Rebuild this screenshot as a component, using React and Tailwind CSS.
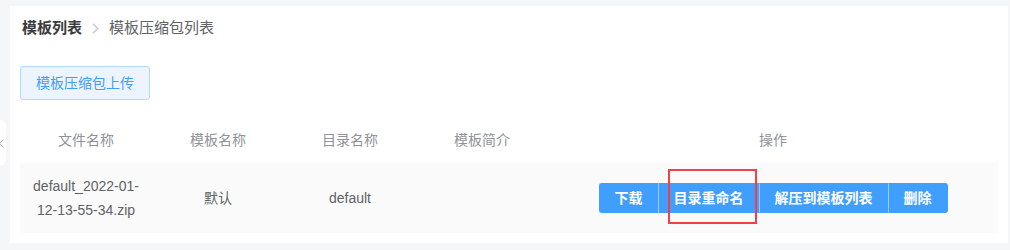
const font = { fontFamily: '"Liberation Sans", "Noto Sans CJK SC", sans-serif' };

const rows = [
  {
    file: ["default_2022-01-", "12-13-55-34.zip"],
    name: "默认",
    dir: "default",
    desc: "",
  },
];

const headers = ["文件名称", "模板名称", "目录名称", "模板简介", "操作"];

const App = () => {
  return (
    <div className="relative min-h-[250px] w-[1010px] bg-[#f5f6f7] pt-[6px] pl-[10px]" style={font}>
      {/* collapsed sidebar toggle */}
      <div className="absolute left-[-14px] top-[120px] flex h-[46px] w-[20px] items-center justify-end rounded-[6px] bg-white pr-[2px]">
        <svg width="5" height="9" viewBox="0 0 5 9" fill="none">
          <path d="M4.5 0.5L0.8 4.5L4.5 8.5" stroke="#a8abb2" strokeWidth="1" />
        </svg>
      </div>

      <div className="w-[998px] bg-white px-[10px] pt-[12px] pb-[10px]">
        {/* Breadcrumb */}
        <div className="flex h-[20px] items-center pl-[2px] text-[15px]">
          <span className="font-bold text-[#3a3c40]">模板列表</span>
          <svg className="mx-[10px]" width="7" height="11" viewBox="0 0 7 11" fill="none">
            <path d="M1 0.8L5.8 5.5L1 10.2" stroke="#c0c4cc" strokeWidth="1.2" />
          </svg>
          <span className="text-[#606266]">模板压缩包列表</span>
        </div>

        {/* Upload button */}
        <div className="mt-[28px]">
          <button className="h-[34px] rounded-[3px] border border-[#b3d8ff] bg-[#ecf5ff] px-[15px] text-[14px] text-[#409eff]">
            模板压缩包上传
          </button>
        </div>

        {/* Table */}
        <div className="mt-[17px]">
          <div className="grid h-[46px] grid-cols-[132px_132px_132px_132px_1fr] items-center text-center text-[14px] text-[#909399]">
            {headers.map((h) => (
              <div key={h}>{h}</div>
            ))}
          </div>

          {rows.map((row) => (
            <div
              key={row.dir}
              className="grid h-[70px] grid-cols-[132px_132px_132px_132px_1fr] items-center bg-[#fafafa] text-center text-[14px] leading-[24px] text-[#606266]"
            >
              <div>
                {row.file.map((line) => (
                  <div key={line}>{line}</div>
                ))}
              </div>
              <div>{row.name}</div>
              <div>{row.dir}</div>
              <div>{row.desc}</div>
              <div className="flex justify-center">
                <div className="relative flex h-[30px] text-[14px] font-bold text-white">
                  <button className="rounded-l-[3px] border border-[#409eff] border-r-[#9fcaff] bg-[#409eff] px-[15px]">
                    下载
                  </button>
                  <button className="border border-[#409eff] border-r-[#9fcaff] border-l-0 bg-[#409eff] px-[15px]">
                    目录重命名
                  </button>
                  <button className="border border-[#409eff] border-r-[#9fcaff] border-l-0 bg-[#409eff] px-[15px]">
                    解压到模板列表
                  </button>
                  <button className="rounded-r-[3px] border border-[#409eff] border-l-0 bg-[#409eff] px-[15px]">
                    删除
                  </button>
                  {/* annotation box */}
                  <div className="pointer-events-none absolute left-[69px] top-[-14px] h-[55px] w-[89px] border-2 border-[#f2404b]" />
                </div>
              </div>
            </div>
          ))}
        </div>
      </div>
    </div>
  );
};

export default App;
